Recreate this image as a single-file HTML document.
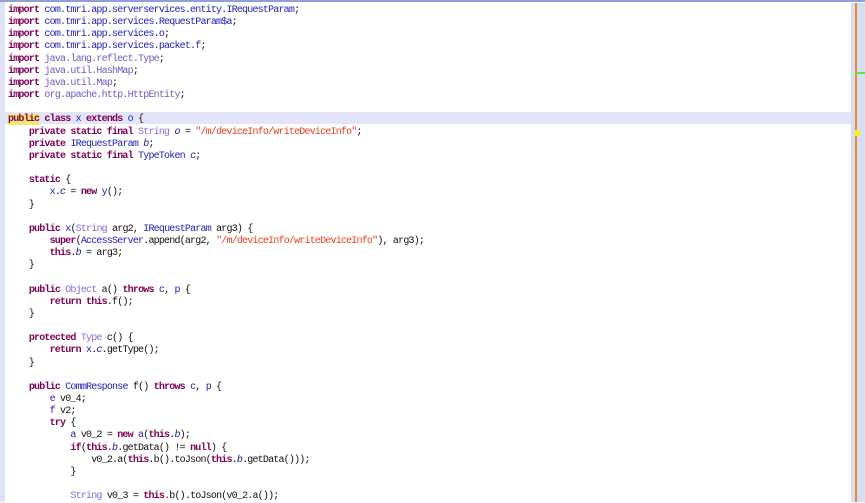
<!DOCTYPE html>
<html><head><meta charset="utf-8"><style>
html,body{margin:0;padding:0;width:865px;height:502px;overflow:hidden;background:#fff;}
#top{position:absolute;left:0;top:0;width:865px;height:2px;background:#8fa0d8;}
#gut{position:absolute;left:0;top:2px;width:5px;height:500px;background:#dfe3f4;}
#sb{position:absolute;left:851px;top:3px;width:14px;height:499px;background:#d8def2;}
#ol{position:absolute;left:855px;top:3px;width:2px;height:499px;background:#e88a30;}
#gm{position:absolute;left:855px;top:72px;width:10px;height:2px;background:#5ee83a;}
#ym{position:absolute;left:855px;top:130px;width:5px;height:6px;background:#f6f020;}
#hl{position:absolute;left:5px;top:112px;width:846px;height:12px;background:#e4e4f8;}
pre{position:absolute;left:8px;top:5px;margin:0;font-family:"Liberation Mono",monospace;font-size:10px;letter-spacing:-0.8px;line-height:12.15px;color:#111;}
.k{color:#7f0055;font-weight:bold;}
.t{color:#8a68d6;}
.c{color:#2020b8;}
.f{color:#1a1a90;font-style:italic;}
.s{color:#e8401a;}
.p{color:#6f5ac4;}
.y{background:#f2e870;}
</style></head><body>
<div id="top"></div><div id="gut"></div><div id="hl"></div>
<div id="sb"></div><div id="ol"></div><div id="gm"></div><div id="ym"></div>
<pre><span class="k">import</span> <span class="c">com.tmri.app.serverservices.entity.IRequestParam</span>;
<span class="k">import</span> <span class="c">com.tmri.app.services.RequestParam$a</span>;
<span class="k">import</span> <span class="c">com.tmri.app.services.o</span>;
<span class="k">import</span> <span class="c">com.tmri.app.services.packet.f</span>;
<span class="k">import</span> <span class="p">java.lang.reflect.Type</span>;
<span class="k">import</span> <span class="p">java.util.HashMap</span>;
<span class="k">import</span> <span class="p">java.util.Map</span>;
<span class="k">import</span> <span class="p">org.apache.http.HttpEntity</span>;

<span class="k y">public</span> <span class="k">class</span> <span class="c">x</span> <span class="k">extends</span> <span class="c">o</span> {
    <span class="k">private static final</span> <span class="t">String</span> <span class="f">o</span> = <span class="s">"/m/deviceInfo/writeDeviceInfo"</span>;
    <span class="k">private</span> <span class="c">IRequestParam</span> <span class="f">b</span>;
    <span class="k">private static final</span> <span class="c">TypeToken</span> <span class="f">c</span>;

    <span class="k">static</span> {
        <span class="c">x</span>.<span class="f">c</span> = <span class="k">new</span> <span class="c">y</span>();
    }

    <span class="k">public</span> <span class="c">x</span>(<span class="t">String</span> arg2, <span class="c">IRequestParam</span> arg3) {
        <span class="k">super</span>(<span class="c">AccessServer</span>.append(arg2, <span class="s">"/m/deviceInfo/writeDeviceInfo"</span>), arg3);
        <span class="k">this</span>.<span class="f">b</span> = arg3;
    }

    <span class="k">public</span> <span class="t">Object</span> a() <span class="k">throws</span> <span class="c">c</span>, <span class="c">p</span> {
        <span class="k">return</span> <span class="k">this</span>.f();
    }

    <span class="k">protected</span> <span class="t">Type</span> c() {
        <span class="k">return</span> <span class="c">x</span>.<span class="f">c</span>.getType();
    }

    <span class="k">public</span> <span class="c">CommResponse</span> f() <span class="k">throws</span> <span class="c">c</span>, <span class="c">p</span> {
        <span class="c">e</span> v0_4;
        <span class="c">f</span> v2;
        <span class="k">try</span> {
            <span class="c">a</span> v0_2 = <span class="k">new</span> <span class="c">a</span>(<span class="k">this</span>.<span class="f">b</span>);
            <span class="k">if</span>(<span class="k">this</span>.<span class="f">b</span>.getData() != <span class="k">null</span>) {
                v0_2.a(<span class="k">this</span>.b().toJson(<span class="k">this</span>.<span class="f">b</span>.getData()));
            }

            <span class="t">String</span> v0_3 = <span class="k">this</span>.b().toJson(v0_2.a());
</pre>
</body></html>
